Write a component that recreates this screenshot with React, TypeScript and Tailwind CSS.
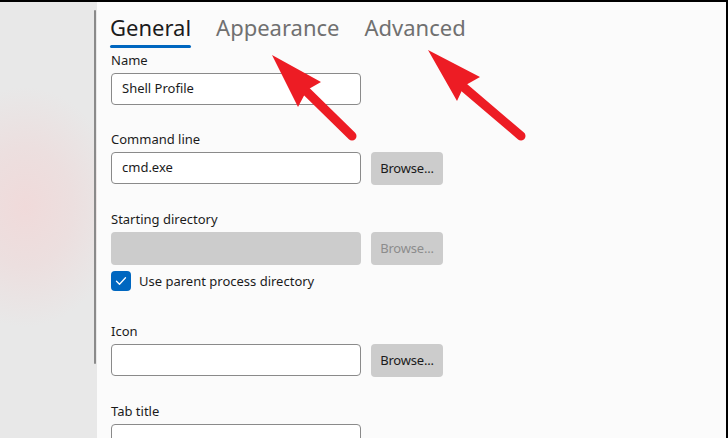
import type { ReactNode } from "react"

const font = { fontFamily: '"Segoe UI", "Noto Sans", "Open Sans", sans-serif' }

function Label({ children }: { children: ReactNode }) {
  return <div className="h-[20px] text-[13px] leading-[20px] text-[#1b1b1b]">{children}</div>
}

function TextBox({ value = "", disabled = false }: { value?: string; disabled?: boolean }) {
  if (disabled) {
    return <div className="h-[33px] w-[250px] rounded-[4px] bg-[#cccccc]" />
  }
  return (
    <div className="flex h-[32px] w-[250px] items-center rounded-[4px] border border-[#8a8a8a] bg-white pl-[10px] text-[13px] text-[#1b1b1b]">
      {value}
    </div>
  )
}

function BrowseButton({ disabled = false }: { disabled?: boolean }) {
  return (
    <div
      className={`flex h-[33px] w-[72px] items-center justify-center rounded-[4px] bg-[#cccccc] text-[13px] tracking-[-0.2px] ${
        disabled ? "text-[#8c8c8c]" : "text-[#1b1b1b]"
      }`}
    >
      Browse...
    </div>
  )
}

function Arrows() {
  return (
    <svg className="pointer-events-none absolute inset-0" width="728" height="438" viewBox="0 0 728 438">
      {/* arrow pointing at Appearance */}
      <line x1="303" y1="88" x2="352" y2="136" stroke="#ed1c24" strokeWidth="9" strokeLinecap="round" />
      <polygon points="272,55 321,82 307,90 298,107" fill="#ed1c24" />
      {/* arrow pointing at Advanced */}
      <line x1="460" y1="84" x2="521" y2="136" stroke="#ed1c24" strokeWidth="9" strokeLinecap="round" />
      <polygon points="428,50 480,77 464,86 457,101" fill="#ed1c24" />
    </svg>
  )
}

export default function App() {
  return (
    <div className="relative flex h-[438px] w-[728px] flex-col overflow-hidden bg-black pb-[2px] pr-[2px] pt-[2px]" style={font}>
      <div className="flex flex-1 flex-col bg-[#fbfbfb]">
        <div className="flex flex-1">
          {/* left nav pane */}
          <div className="flex w-[97px] justify-end bg-[#e8e8e8] bg-[radial-gradient(ellipse_95px_120px_at_25px_205px,#f0dada_0%,#ecdfdf_50%,#e8e8e8_100%)] pr-[1px]">
            <div className="mt-[8px] h-[354px] w-[2px] rounded-full bg-[#8a8a8a]" />
          </div>

          {/* settings content */}
          <div className="flex-1 pl-[14px] pt-[9px]">
            <div className="flex gap-[25px] text-[22px] leading-[32px]">
              <div className="-ml-[1px] flex flex-col">
                <span className="text-[#1b1b1b]">General</span>
                <div className="mt-[2px] h-[3px] rounded-full bg-[#0067c0]" />
              </div>
              <span className="text-[#707070]">Appearance</span>
              <span className="text-[#707070]">Advanced</span>
            </div>

            <div className="mt-[2px] flex flex-col">
              <Label>Name</Label>
              <div className="mt-[3px]">
                <TextBox value="Shell Profile" />
              </div>

              <div className="mt-[24px]">
                <Label>Command line</Label>
              </div>
              <div className="mt-[3px] flex gap-[10px]">
                <TextBox value="cmd.exe" />
                <BrowseButton />
              </div>

              <div className="mt-[24px]">
                <Label>Starting directory</Label>
              </div>
              <div className="mt-[3px] flex gap-[10px]">
                <TextBox disabled />
                <BrowseButton disabled />
              </div>
              <div className="mt-[6px] flex items-center gap-[8px]">
                <div className="flex h-[20px] w-[20px] items-center justify-center rounded-[4px] bg-[#0067c0]">
                  <svg width="12" height="12" viewBox="0 0 12 12" fill="none">
                    <path d="M1.5 6.3 L4.5 9.2 L10.5 2.8" stroke="white" strokeWidth="1.3" strokeLinecap="round" strokeLinejoin="round" />
                  </svg>
                </div>
                <span className="text-[13px] leading-[20px] text-[#1b1b1b]">Use parent process directory</span>
              </div>

              <div className="mt-[30px]">
                <Label>Icon</Label>
              </div>
              <div className="mt-[3px] flex gap-[10px]">
                <TextBox />
                <BrowseButton />
              </div>

              <div className="mt-[24px]">
                <Label>Tab title</Label>
              </div>
              <div className="mt-[3px]">
                <TextBox />
              </div>
            </div>
          </div>
        </div>
        <div className="h-[2px] bg-[#d2d2d2]" />
        <div className="h-[2px] bg-[#fbfbfb]" />
      </div>
      <Arrows />
    </div>
  )
}
